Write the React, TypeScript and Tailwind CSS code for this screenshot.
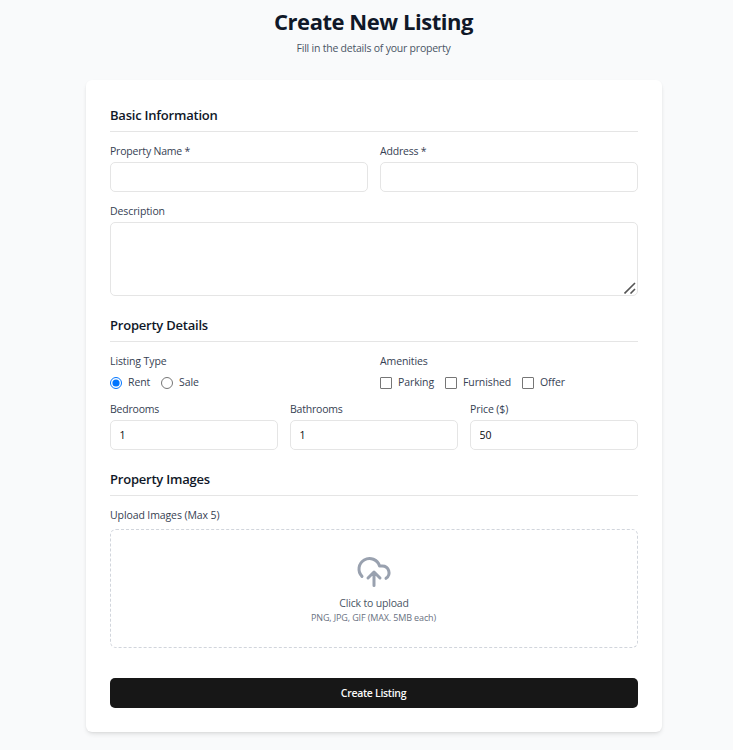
import type { ReactNode } from "react";

function SectionTitle({ children }: { children: ReactNode }) {
  return (
    <h2 className="h-7 border-b border-[#e5e5e5] text-[13px] leading-[22px] font-semibold tracking-[-0.22px] text-gray-900">
      {children}
    </h2>
  );
}

function Label({ children, tight }: { children: ReactNode; tight?: boolean }) {
  return (
    <span className={"block h-3.5 text-[10.5px] leading-[14px] font-medium whitespace-nowrap text-gray-700 " + (tight ? "tracking-[-0.2px]" : "tracking-[-0.1px]")}>
      {children}
    </span>
  );
}

function Field({ label, value, tight }: { label: string; value?: string; tight?: boolean }) {
  return (
    <label className="block">
      <Label tight={tight}>{label}</Label>
      <input
        defaultValue={value}
        className="mt-1 block h-[30px] w-full rounded-[5px] border border-[#e5e5e5] bg-white px-[8.5px] text-[10.5px] text-neutral-950 outline-none"
      />
    </label>
  );
}

function Choice({ type, label, checked, width }: { type: "radio" | "checkbox"; label: string; checked?: boolean; width: string }) {
  return (
    <label className={"flex items-start gap-1.5 " + width}>
      {type === "radio" ? (
        <input type="radio" name="listing" defaultChecked={checked} className="m-0 mt-0.5 size-3 shrink-0" />
      ) : (
        <input type="checkbox" className="m-0 mt-0.5 size-3 shrink-0 appearance-none rounded-[1px] border border-[#767676] bg-white" />
      )}
      <Label>{label}</Label>
    </label>
  );
}

export default function App() {
  return (
    <div className="h-[750px] w-[733px] overflow-hidden bg-gray-50 pl-[86px] font-['Open_Sans','Noto_Sans',sans-serif]">
      <div className="w-[576px]">
        <header className="h-20 pt-2 pr-px text-center">
          <h1 className="h-[27px] text-[22px] leading-[27px] font-bold tracking-[-0.46px] text-gray-900">Create New Listing</h1>
          <p className="mt-1.5 text-[10.5px] leading-[14px] tracking-[-0.22px] text-gray-600">Fill in the details of your property</p>
        </header>
        <form className="h-[652px] rounded-md bg-white p-6 shadow-[0_3px_5px_-1px_rgba(0,0,0,0.1),0_1px_3px_-1px_rgba(0,0,0,0.1)]">
          <section>
            <SectionTitle>Basic Information</SectionTitle>
            <div className="mt-3 grid grid-cols-2 gap-3">
              <Field label="Property Name *" tight />
              <Field label="Address *" tight />
            </div>
            <label className="relative mt-3 block">
              <Label>Description</Label>
              <textarea className="mt-1 block h-[74px] w-full resize-none rounded-[5px] border border-[#e5e5e5] bg-white outline-none" />
              <svg className="absolute right-[2px] bottom-[2px] size-3" viewBox="0 0 12 12" fill="none" stroke="#555" strokeWidth="1.6">
                <path d="M.5 11.5 11 1M6.5 11.5 11 7" />
              </svg>
            </label>
          </section>
          <section className="mt-[18px]">
            <SectionTitle>Property Details</SectionTitle>
            <div className="mt-3 grid grid-cols-2 gap-3">
              <div>
                <Label>Listing Type</Label>
                <div className="mt-[7px] flex h-[15px]">
                  <Choice type="radio" label="Rent" checked width="w-[51px]" />
                  <Choice type="radio" label="Sale" width="w-[51px]" />
                </div>
              </div>
              <div>
                <Label>Amenities</Label>
                <div className="mt-[7px] flex h-[15px]">
                  <Choice type="checkbox" label="Parking" width="w-[65px]" />
                  <Choice type="checkbox" label="Furnished" width="w-[77px]" />
                  <Choice type="checkbox" label="Offer" width="w-[60px]" />
                </div>
              </div>
            </div>
            <div className="mt-3 grid grid-cols-3 gap-3">
              <Field label="Bedrooms" value="1" tight />
              <Field label="Bathrooms" value="1" tight />
              <Field label="Price ($)" value="50" />
            </div>
          </section>
          <section className="mt-[18px]">
            <SectionTitle>Property Images</SectionTitle>
            <div className="mt-3">
              <Label>Upload Images (Max 5)</Label>
            </div>
            <div className="mt-[7px] flex h-[119px] flex-col items-center rounded-md border border-dashed border-gray-300 pt-6">
              <svg className="size-9 text-gray-400" viewBox="0 0 24 24" fill="none" stroke="currentColor" strokeWidth="2" strokeLinecap="round" strokeLinejoin="round">
                <path d="M4 14.899A7 7 0 1 1 15.71 8h1.79a4.5 4.5 0 0 1 2.5 8.242M12 12v9M16 16l-4-4-4 4" />
              </svg>
              <span className="mt-1.5 text-[10.5px] leading-[14px] tracking-[-0.17px] text-gray-600">Click to upload</span>
              <span className="mt-px mr-px text-[9px] leading-[14px] tracking-[-0.13px] text-gray-500">PNG, JPG, GIF (MAX. 5MB each)</span>
            </div>
          </section>
          <button type="button" className="mt-[30px] block h-[30px] w-full rounded-[5px] bg-neutral-900 pt-px pr-px text-[10.5px] font-semibold tracking-[-0.3px] text-neutral-50">
            Create Listing
          </button>
        </form>
      </div>
    </div>
  );
}
